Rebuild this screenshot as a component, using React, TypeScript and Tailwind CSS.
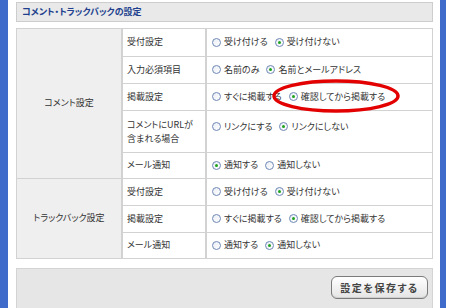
import React from "react";

const Radio = ({ checked }: { checked?: boolean }) => (
  <span className="w-[9px] h-[9px] shrink-0 rounded-full border border-[#6f88b6] bg-gradient-to-br from-[#e9edf4] to-white flex items-center justify-center mr-[3px]">
    {checked && <span className="w-[3px] h-[3px] rounded-full bg-[#1fa31f]" />}
  </span>
);

const Option = ({ label, checked }: { label: string; checked?: boolean }) => (
  <span className="flex items-center whitespace-nowrap">
    <Radio checked={checked} />
    {label}
  </span>
);

type Row = {
  label: React.ReactNode;
  options: [string, boolean][];
  tall?: boolean;
};

const commentRows: Row[] = [
  { label: "受付設定", options: [["受け付ける", false], ["受け付けない", true]] },
  { label: "入力必須項目", options: [["名前のみ", false], ["名前とメールアドレス", true]] },
  { label: "掲載設定", options: [["すぐに掲載する", false], ["確認してから掲載する", true]] },
  {
    label: (
      <>
        コメントにURLが
        <br />
        含まれる場合
      </>
    ),
    options: [["リンクにする", false], ["リンクにしない", true]],
    tall: true,
  },
  { label: "メール通知", options: [["通知する", true], ["通知しない", false]] },
];

const trackbackRows: Row[] = [
  { label: "受付設定", options: [["受け付ける", false], ["受け付けない", true]] },
  { label: "掲載設定", options: [["すぐに掲載する", false], ["確認してから掲載する", true]] },
  { label: "メール通知", options: [["通知する", false], ["通知しない", true]] },
];

const Cells = ({ row }: { row: Row }) => (
  <>
    <div
      className={`bg-white pl-[4px] flex leading-[14px] ${
        row.tall ? "items-start pt-[7px]" : "items-center"
      }`}
    >
      <span>{row.label}</span>
    </div>
    <div
      className={`bg-white pl-[5px] flex gap-[7px] ${
        row.tall ? "items-start pt-[9px]" : "items-center"
      }`}
    >
      {row.options.map(([label, checked]) => (
        <Option key={label} label={label} checked={checked} />
      ))}
    </div>
  </>
);

export default function App() {
  return (
    <div
      className="relative w-[450px] h-[308px] overflow-hidden bg-white flex text-[9px] text-[#333] [font-feature-settings:'palt']"
      style={{ fontFamily: '"Noto Sans CJK JP", "Noto Sans", sans-serif' }}
    >
      <div className="w-[8px] h-full shrink-0 bg-[#3f6bcb]" />

      <div className="ml-[8px] w-[417px] shrink-0 pt-[2px] flex flex-col">
        {/* Section header */}
        <div className="h-[20px] border border-[#cdcdcd] bg-[#e9e9e9] flex items-center pl-[5px]">
          <span className="font-bold text-[#203f8e]">コメント・トラックバックの設定</span>
        </div>

        {/* Settings table */}
        <div className="mt-[6px] p-[1px] bg-[#d2d2d2] grid grid-cols-[104px_82px_225px] grid-rows-[27px_26px_26px_41px_25px_26px_26px_25px] gap-x-[2px] gap-y-[1px]">
          <div className="row-span-5 bg-[#efefef] flex items-center justify-center">
            コメント設定
          </div>
          {commentRows.map((r, i) => (
            <Cells key={i} row={r} />
          ))}
          <div className="row-span-3 bg-[#efefef] flex items-center justify-center">
            トラックバック設定
          </div>
          {trackbackRows.map((r, i) => (
            <Cells key={"t" + i} row={r} />
          ))}
        </div>

        {/* Save bar */}
        <div className="mt-[9px] h-[41px] bg-[#e6e6e6] border-t border-x border-[#d4d4d4] flex justify-end items-start pt-[7px] pr-[4px]">
          <button className="w-[97px] h-[23px] rounded-[6px] border border-[#7b7b7b] bg-gradient-to-b from-white to-[#e4e4e4] shadow-[inset_0_-1px_0_#cfcfcf] text-[10px] font-bold tracking-[1.5px] text-[#444]">
            設定を保存する
          </button>
        </div>
      </div>

      <div className="ml-[7px] w-[6px] h-full shrink-0 bg-[#3f6bcb]" />

      {/* Red annotation ellipse */}
      <svg
        className="absolute left-[270px] top-[78px] pointer-events-none"
        width="132"
        height="36"
        viewBox="0 0 132 36"
      >
        <ellipse cx="66" cy="18" rx="62" ry="15" fill="none" stroke="#e30000" strokeWidth="3.5" />
      </svg>
    </div>
  );
}
